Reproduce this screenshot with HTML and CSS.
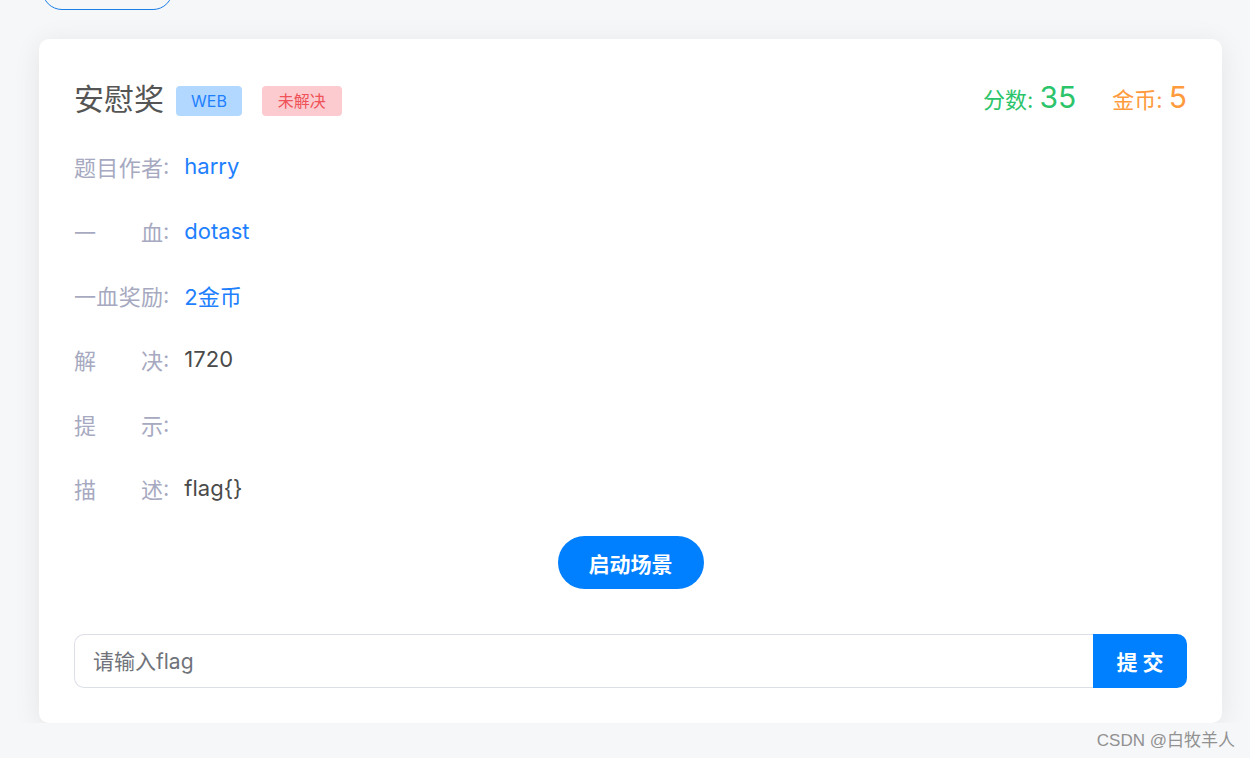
FILE: index.html
```html
<!DOCTYPE html>
<html lang="zh-CN">
<head>
    <meta charset="UTF-8">
    <meta name="viewport" content="width=device-width, initial-scale=1.0">
    <title>题目详情</title>
    <link rel="stylesheet" href="styles.css">
</head>
<body>
    <div class="page">
        <button class="back-btn" type="button" aria-label="返回"></button>

        <div class="challenge-card">
            <div class="card-header">
                <div class="title-group">
                    <h2 class="challenge-title">安慰奖</h2>
                    <span class="tag tag-type">WEB</span>
                    <span class="tag tag-status">未解决</span>
                </div>
                <div class="score-group">
                    <span class="score">分数: <b>35</b></span>
                    <span class="coin">金币: <b>5</b></span>
                </div>
            </div>

            <div class="info-list">
                <div class="info-row">
                    <span class="info-label">题目作者</span><span class="colon">:</span>
                    <span class="info-value link">harry</span>
                </div>
                <div class="info-row">
                    <span class="info-label">一血</span><span class="colon">:</span>
                    <span class="info-value link">dotast</span>
                </div>
                <div class="info-row">
                    <span class="info-label">一血奖励</span><span class="colon">:</span>
                    <span class="info-value link">2金币</span>
                </div>
                <div class="info-row">
                    <span class="info-label">解决</span><span class="colon">:</span>
                    <span class="info-value">1720</span>
                </div>
                <div class="info-row">
                    <span class="info-label">提示</span><span class="colon">:</span>
                    <span class="info-value"></span>
                </div>
                <div class="info-row">
                    <span class="info-label">描述</span><span class="colon">:</span>
                    <span class="info-value">flag{}</span>
                </div>
            </div>

            <div class="launch-wrap">
                <button class="launch-btn" type="button">启动场景</button>
            </div>

            <form class="flag-form" onsubmit="return false;">
                <input class="flag-input" type="text" placeholder="请输入flag">
                <button class="submit-btn" type="submit">提 交</button>
            </form>
        </div>
    </div>

    <div class="watermark">CSDN @白牧羊人</div>
</body>
</html>
```

FILE: styles.css
```css
* {
    box-sizing: border-box;
}

body {
    margin: 0;
    background: #f6f7f9;
    font-family: "Inter", "Noto Sans CJK SC", sans-serif;
    color: #4a4a4a;
    overflow: hidden;
}

.page {
    padding: 0 28px 0 39px;
}

/* Button left over from the scrolled-away header */
.back-btn {
    display: block;
    width: 131px;
    height: 40px;
    margin: -30px 0 29px 3px;
    background: transparent;
    border: 1px solid #1a7fe6;
    border-radius: 20px;
}

.challenge-card {
    background: #fff;
    border-radius: 10px;
    padding: 35px;
    box-shadow: 0 4px 28px rgba(0, 0, 0, 0.08);
}

.card-header {
    display: flex;
    justify-content: space-between;
    align-items: center;
    height: 46px;
}

.title-group {
    display: flex;
    align-items: center;
}

.challenge-title {
    margin: 0 12px 0 0;
    font-size: 30px;
    font-weight: normal;
    color: #555;
}

.tag {
    display: inline-block;
    height: 30px;
    line-height: 30px;
    margin-top: 8px;
    padding: 0 15px;
    border-radius: 4px;
    font-size: 16px;
}

.tag-type {
    background: #b3d8ff;
    color: #1e80ff;
}

.tag-status {
    margin-left: 20px;
    padding: 0 16px;
    background: #fbcbcf;
    color: #ef5257;
}

.score-group {
    display: flex;
    align-items: baseline;
    gap: 36px;
}

.score,
.coin {
    font-size: 22px;
}

.score b,
.coin b {
    font-weight: normal;
    font-size: 30px;
}

.score {
    color: #2cc46b;
}

.coin {
    color: #ff9b3d;
}

.info-list {
    margin-top: 14px;
}

.info-row {
    display: flex;
    align-items: center;
    height: 64.4px;
    font-size: 22px;
}

.info-label {
    display: inline-block;
    width: 89px;
    color: #a6a9c0;
    text-align: justify;
    text-align-last: justify;
}

.colon {
    color: #a6a9c0;
    margin-right: 15px;
}

.info-value {
    color: #4a4a4a;
}

.info-value.link {
    color: #1e80ff;
}

.launch-wrap {
    display: flex;
    justify-content: center;
    margin: 16px 0 45px;
}

.launch-btn {
    width: 146px;
    height: 53px;
    border: none;
    border-radius: 27px;
    background: #0080ff;
    color: #fff;
    font-family: "Noto Sans CJK SC", sans-serif;
    font-size: 21px;
    font-weight: bold;
    cursor: pointer;
}

.flag-form {
    display: flex;
    height: 54px;
}

.flag-input {
    flex: 1;
    height: 100%;
    padding: 0 18px;
    border: 1px solid #dcdfe6;
    border-right: none;
    border-radius: 10px 0 0 10px;
    font-family: "Inter", "Noto Sans CJK SC", sans-serif;
    font-size: 21px;
    outline: none;
}

.flag-input::placeholder {
    color: #707379;
}

.submit-btn {
    width: 94px;
    height: 100%;
    border: none;
    border-radius: 0 10px 10px 0;
    background: #0080ff;
    color: #fff;
    font-family: "Noto Sans CJK SC", sans-serif;
    font-size: 21px;
    font-weight: bold;
    cursor: pointer;
}

.watermark {
    position: absolute;
    right: 15px;
    bottom: 7px;
    font-family: "Liberation Sans", "Noto Sans CJK SC", sans-serif;
    font-size: 17px;
    color: #919191;
}
```
